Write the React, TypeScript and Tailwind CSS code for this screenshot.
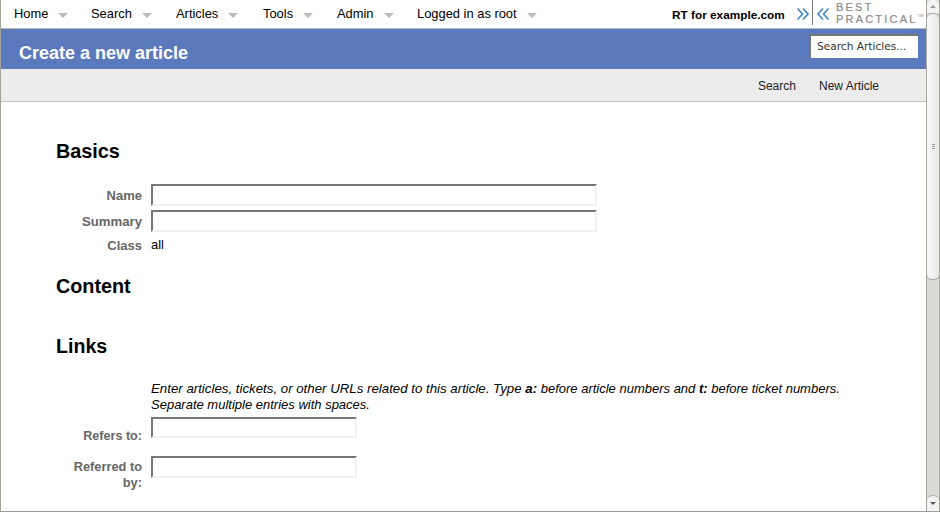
import React from "react";

const nav = [
  { t: "Home", w: "w-[77px]" },
  { t: "Search", w: "w-[85px]" },
  { t: "Articles", w: "w-[87px]" },
  { t: "Tools", w: "w-[74px]" },
  { t: "Admin", w: "w-[80px]" },
  { t: "Logged in as root", w: "w-[130px]" },
];

function Field({ label, size, w, h, mb }: { label: React.ReactNode; size: string; w: string; h: string; mb: string }) {
  return (
    <div className={`flex ${mb}`}>
      <div className={`w-[86px] mr-[9px] text-right font-bold ${size} leading-[16px] text-[#666] pt-[4px] shrink-0`}>{label}</div>
      <div className={`${w} ${h} border-2 border-t-[#767676] border-l-[#767676] border-r-[#f1f1f1] border-b-[#f1f1f1] bg-white`} />
    </div>
  );
}

function Chevrons({ flip }: { flip?: boolean }) {
  return (
    <svg width="14" height="16" viewBox="0 0 14 16" className={flip ? "-scale-x-100" : ""}>
      <path d="M1.5 2.5 L6.5 8 L1.5 13.5 M7 2.5 L12 8 L7 13.5" fill="none" stroke="#3d87c4" strokeWidth="1.6" />
    </svg>
  );
}

export default function App() {
  return (
    <div className="w-[940px] h-[512px] flex overflow-hidden bg-white font-['Liberation_Sans',Arial,sans-serif] text-black border-b border-[#9a9a9a]">
      <div className="w-[926px] h-[511px] border-l border-[#a5a29c] overflow-hidden shrink-0">
        <div className="h-[28px] flex items-center bg-white">
          <div className="flex pl-[13px] w-[663px] shrink-0">
            {nav.map((n) => (
              <div key={n.t} className={`${n.w} shrink-0 flex items-center text-[12.9px] leading-[16px]`}>
                <span>{n.t}</span>
                <span className="ml-[10px] mt-[3px] w-0 h-0 border-x-[5px] border-x-transparent border-t-[5px] border-t-[#bbbbbb]" />
              </div>
            ))}
          </div>
          <div className="w-[133px] shrink-0 pl-[8px] font-bold text-[11.8px] leading-[16px] pt-[1px] whitespace-nowrap">RT for example.com</div>
          <div className="flex items-center shrink-0 -ml-[1px] h-[28px]">
            <Chevrons />
            <div className="w-px h-[25px] bg-[#777] ml-[2px] mr-[3px] self-start" />
            <Chevrons flip />
            <div className="ml-[6px] -mt-[2px] text-[#8b8b8b] text-[11px] leading-[12px] tracking-[2.2px] [-webkit-text-stroke:0.2px_#8b8b8b] whitespace-nowrap">
              <div>BEST</div>
              <div className="flex items-start">PRACTICAL<span className="text-[4px] leading-[6px] tracking-normal [-webkit-text-stroke:0]">TM</span></div>
            </div>
          </div>
        </div>
        <div className="h-[41px] border-t border-[#b9b9b9] bg-[#5b7abd] flex items-start justify-between">
          <h1 className="ml-[18px] mt-[14px] text-[18px] leading-[21px] font-bold text-white">Create a new article</h1>
          <div className="mt-[5px] mr-[8px] w-[109px] h-[24px] bg-white border-t-2 border-l-2 border-t-[#767676] border-l-[#767676] pl-[6px] text-[10.6px] leading-[20px] text-[#333] font-['DejaVu_Sans',sans-serif] whitespace-nowrap">Search Articles...</div>
        </div>
        <div className="h-[33px] bg-[#ececec] border-b border-[#c4c4c4] flex items-center justify-end pr-[47px] text-[12px] leading-[16px] text-[#222] gap-[23px] pt-[2px]">
          <span>Search</span>
          <span>New Article</span>
        </div>
        <div className="pl-[55px] pr-[60px] pt-[37px]">
          <h2 className="text-[19.8px] leading-[24px] font-bold mb-[21px]">Basics</h2>
          <Field label="Name" size="text-[13px]" w="w-[446px]" h="h-[22px]" mb="mb-[4px]" />
          <Field label="Summary" size="text-[13.2px]" w="w-[446px]" h="h-[22px]" mb="mb-[5px]" />
          <div className="flex text-[13px] leading-[16px]">
            <div className="w-[86px] mr-[9px] text-right font-bold text-[#666] pt-[1px]">Class</div>
            <div>all</div>
          </div>
          <h2 className="text-[19.8px] leading-[24px] font-bold mt-[20px]">Content</h2>
          <h2 className="text-[19.6px] leading-[24px] font-bold mt-[36px] mb-[23px]">Links</h2>
          <div className="ml-[95px] text-[13px] leading-[15.5px] italic mb-[5px] w-[700px]">
            <span className="text-[13.27px]">Enter articles, tickets, or other URLs related to this article. Type <b>a:</b></span> before article numbers and <b>t:</b> before ticket numbers.<br />Separate multiple entries with spaces.
          </div>
          <Field label={<span className="block pt-[7px]">Refers to:</span>} size="text-[12.6px]" w="w-[206px]" h="h-[21px]" mb="mb-[12px]" />
          <Field label={<span className="block -mt-[1px]">Referred to by:</span>} size="text-[12.8px]" w="w-[206px]" h="h-[22px]" mb="" />
        </div>
      </div>
      <div className="w-[14px] h-[511px] shrink-0 bg-[#dcdad5] border-x border-[#a8a6a1] flex flex-col">
        <div className="h-[13px] bg-[#f4f3f1] flex items-center justify-center rounded-t-[5px]">
          <span className="w-0 h-0 border-x-[3px] border-x-transparent border-b-[3px] border-b-[#999]" />
        </div>
        <div className="h-[267px] bg-gradient-to-r from-[#fbfbfb] to-[#e9e8e6] border border-[#a8a6a1] rounded-[6px] -mx-px flex flex-col items-center justify-center gap-[1px]">
          <span className="w-[3px] h-px bg-[#999]" />
          <span className="w-[3px] h-px bg-[#999]" />
          <span className="w-[3px] h-px bg-[#999]" />
        </div>
        <div className="flex-1" />
        <div className="h-[16px] bg-[#f4f3f1] border-t border-[#a8a6a1] rounded-t-[6px] flex items-center justify-center">
          <span className="w-0 h-0 border-x-[3px] border-x-transparent border-t-[3px] border-t-[#555]" />
        </div>
      </div>
    </div>
  );
}
